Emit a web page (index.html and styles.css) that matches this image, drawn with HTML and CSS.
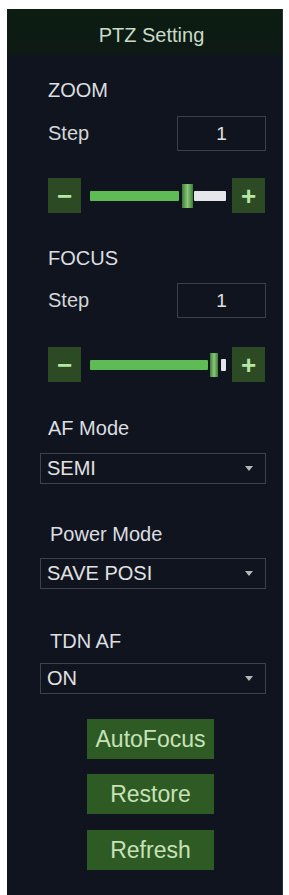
FILE: index.html
```html
<!DOCTYPE html>
<html>
<head>
<meta charset="UTF-8">
<link rel="stylesheet" href="styles.css">
</head>
<body>
<div class="panel">
<div class="head">PTZ Setting</div>
<div class="body">

<div class="lbl zoom-lbl">ZOOM</div>
<div class="steprow">
    <span class="steplbl">Step</span>
    <div class="stepval">1</div>
</div>
<div class="slider zoom-sl">
    <div class="sbtn">&minus;</div>
    <div class="track">
        <div class="fill" style="width:89px"></div>
        <div class="thumb"></div>
        <div class="rest"></div>
    </div>
    <div class="sbtn">+</div>
</div>

<div class="lbl focus-lbl">FOCUS</div>
<div class="steprow">
    <span class="steplbl">Step</span>
    <div class="stepval">1</div>
</div>
<div class="slider focus-sl">
    <div class="sbtn">&minus;</div>
    <div class="track">
        <div class="fill" style="width:118px"></div>
        <div class="thumb small"></div>
        <div class="rest short"></div>
    </div>
    <div class="sbtn">+</div>
</div>

<div class="lbl af-lbl">AF Mode</div>
<div class="sel af-sel"><span>SEMI</span><i class="arr"></i></div>

<div class="lbl pw-lbl">Power Mode</div>
<div class="sel pw-sel"><span>SAVE POSI</span><i class="arr"></i></div>

<div class="lbl tdn-lbl">TDN AF</div>
<div class="sel tdn-sel"><span>ON</span><i class="arr"></i></div>

<div class="btns">
    <div class="btn">AutoFocus</div>
    <div class="btn">Restore</div>
    <div class="btn">Refresh</div>
</div>

</div>
</div>
</body>
</html>
```
FILE: styles.css
```css
body{margin:0;background:#fff;font-family:'Liberation Sans',Arial,sans-serif;color:#d4d6d8}
.panel{margin:9px 6px 0 7px;height:886px;background:#10141f;display:flex;flex-direction:column;border-right:1px solid #2a2e36}
.head{height:46px;display:flex;align-items:center;justify-content:center;padding:6px 0 0 14px;box-sizing:border-box;font-size:20px;color:#c9dcc8;background:linear-gradient(#0c1d12,#0d1a14)}
.body{display:flex;flex-direction:column;padding:0 16px 0 33px}
.lbl{font-size:20px;line-height:24px;margin-left:8px;color:#dcdee0}
.zoom-lbl{margin-top:23px}
.focus-lbl{margin-top:33px}
.af-lbl{margin-top:34px}
.pw-lbl{margin-top:38px;margin-left:10px}
.tdn-lbl{margin-top:40px;margin-left:10px}
.steprow{display:flex;align-items:center;justify-content:space-between;margin:14px 0 0 8px;height:35px}
.focus-lbl+.steprow{margin-top:13px}
.steplbl{font-size:20px}
.stepval{width:87px;height:33px;border:1px solid #3a3f48;display:flex;align-items:center;justify-content:center;font-size:19px;color:#e0e0e0}
.slider{display:flex;align-items:center;height:35px;padding:0 1px 0 8px}
.zoom-sl{margin-top:27px}
.focus-sl{margin-top:29px}
.sbtn{width:33px;height:35px;background:#2c4a24;color:#b6e6a2;font-size:26px;font-weight:bold;display:flex;align-items:center;justify-content:center;line-height:1}
.track{flex:1;display:flex;align-items:center;height:24px;margin:0 6px 0 9px}
.fill{height:10px;background:#5fbb55;border-radius:1px}
.thumb{width:11px;height:24px;margin:0 1px 0 3px;background:linear-gradient(90deg,#3b7d33,#8ac77a 50%,#3b7d33)}
.thumb.small{width:8px;margin:0 3px 0 2px}
.rest{flex:1;height:10px;background:#e4e6ea;border-radius:1px}
.rest.short{flex:0 0 5px;height:12px}
.sel{display:flex;align-items:center;justify-content:space-between;height:29px;border:1px solid #3b424d;padding:0 12px 0 6px;font-size:20px;color:#e2e2e2}
.af-sel{margin-top:13px}
.pw-sel{margin-top:12px}
.tdn-sel{margin-top:10px}
.arr{width:0;height:0;border-left:4px solid transparent;border-right:4px solid transparent;border-top:5px solid #b4b8b4}
.btns{display:flex;flex-direction:column;align-items:center;gap:15px;margin-top:25px;padding-right:5px}
.btn{width:127px;height:40px;background:#2e5a24;color:#c7e2b8;font-size:23px;display:flex;align-items:center;justify-content:center}
.btn:last-child{margin-top:1px}
```
